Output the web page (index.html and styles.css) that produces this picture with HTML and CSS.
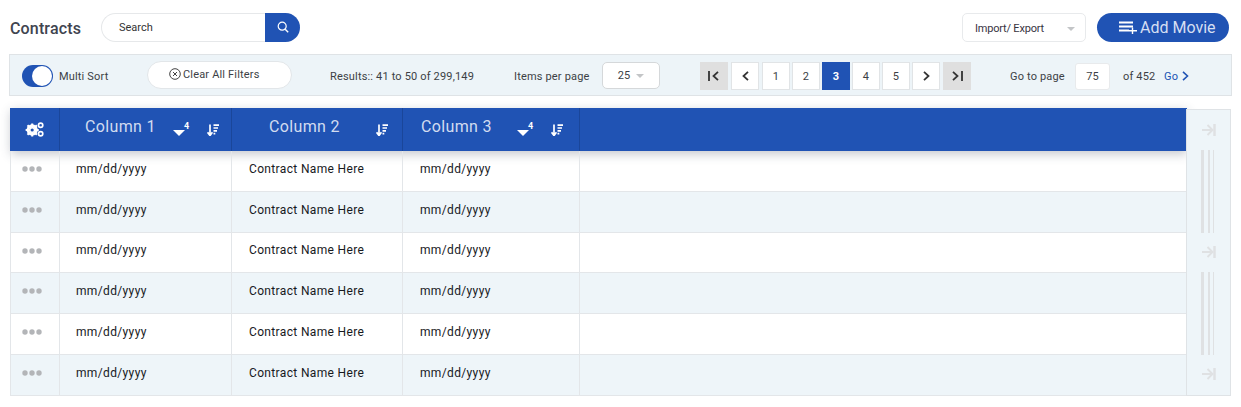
FILE: index.html
```html
<!DOCTYPE html>
<html lang="en">
<head>
<meta charset="UTF-8">
<title>Contracts</title>
<link rel="stylesheet" href="styles.css">
</head>
<body>
<svg class="defs" width="0" height="0">
  <symbol id="sort" viewBox="0 0 12 12">
    <path d="M3 0.5v10M0.6 8.300l2.400 3.200 2.400-3.200" fill="none" stroke="#fff" stroke-width="1.7"/>
    <path d="M6.500 1.200h5.500M6.500 4h4.500M6.500 6.800h3.500M6.500 9.600h1.800" stroke="#fff" stroke-width="1.700"/>
  </symbol>
  <symbol id="rail" viewBox="0 0 14 12">
    <path d="M0 6h10M5.5 1l5 5-5 5" fill="none" stroke="#dfe1e3" stroke-width="1.9"/>
    <path d="M12.5 0v12" stroke="#dfe1e3" stroke-width="2.5"/>
  </symbol>
  <symbol id="dots" viewBox="0 0 20 6">
    <circle cx="3" cy="3" r="2.7" fill="#b3b5b8"/><circle cx="10" cy="3" r="2.7" fill="#b3b5b8"/><circle cx="17" cy="3" r="2.7" fill="#b3b5b8"/>
  </symbol>
</svg>

<div class="topbar">
  <h1 class="title">Contracts</h1>
  <div class="search">
    <span class="search-text">Search</span>
    <span class="search-btn">
      <svg width="12" height="12" viewBox="0 0 12 12"><circle cx="5.2" cy="5.2" r="4" fill="none" stroke="#fff" stroke-width="1.2"/><path d="M8.2 8.2l3 3" stroke="#fff" stroke-width="1.4"/></svg>
    </span>
  </div>
  <div class="import">Import/ Export<span class="caret"></span></div>
  <button class="add-btn">
    <svg width="18" height="13" viewBox="0 0 18 13"><path d="M0 1.500h14M0 5.500h14M0 9.500h10" stroke="#fff" stroke-width="1.800" fill="none"/><path d="M13.500 6.500v6.500M10 9.700h8" stroke="#fff" stroke-width="1.400"/></svg>
    Add Movie
  </button>
</div>

<div class="toolbar">
  <span class="toggle"><span class="knob"></span></span>
  <span class="multi">Multi Sort</span>
  <button class="clear">
    <svg width="12" height="12" viewBox="0 0 12 12"><circle cx="6" cy="6" r="5.300" fill="none" stroke="#444" stroke-width="1"/><path d="M4 4l4 4M8 4l-4 4" stroke="#444" stroke-width="1"/></svg>
    Clear All Filters
  </button>
  <span class="results">Results:: 41 to 50 of 299,149</span>
  <span class="items">Items per page</span>
  <div class="per-page">25<span class="caret"></span></div>
  <div class="pager">
    <a class="pg pg-end pg-first"><svg width="12" height="10" viewBox="0 0 12 10"><path d="M1 0v10" stroke="#333" stroke-width="1.800"/><path d="M10 .8L5.500 5l4.500 4.200" fill="none" stroke="#333" stroke-width="1.800"/></svg></a>
    <a class="pg pg-prev"><svg width="7" height="10" viewBox="0 0 7 10"><path d="M6 .8L1.500 5 6 9.200" fill="none" stroke="#333" stroke-width="1.800"/></svg></a>
    <a class="pg">1</a>
    <a class="pg">2</a>
    <a class="pg pg-on">3</a>
    <a class="pg">4</a>
    <a class="pg">5</a>
    <a class="pg"><svg width="7" height="10" viewBox="0 0 7 10"><path d="M1 .8L5.500 5 1 9.200" fill="none" stroke="#333" stroke-width="1.800"/></svg></a>
    <a class="pg pg-end pg-last"><svg width="12" height="10" viewBox="0 0 12 10"><path d="M11 0v10" stroke="#333" stroke-width="1.800"/><path d="M2 .8L6.500 5 2 9.200" fill="none" stroke="#333" stroke-width="1.800"/></svg></a>
  </div>
  <span class="goto">Go to page</span>
  <span class="page-input">75</span>
  <span class="of">of 452</span>
  <a class="go">Go
    <svg width="7" height="10" viewBox="0 0 7 10"><path d="M1 .8L5.500 5 1 9.200" fill="none" stroke="#2053b4" stroke-width="1.600"/></svg>
  </a>
</div>

<div class="grid-wrap">
  <table class="grid">
    <colgroup>
      <col class="c0"><col class="c1"><col class="c2"><col class="c3"><col>
    </colgroup>
    <thead>
      <tr>
        <th>
          <svg class="gears" width="20" height="15" viewBox="0 0 20 16">
            <circle cx="7" cy="8.500" r="4.500" fill="none" stroke="#fff" stroke-width="3"/>
            <path d="M7 1.500v14M0 8.500h14M2 3.500l10 10M12 3.500l-10 10" stroke="#fff" stroke-width="2.200"/>
            <circle cx="7" cy="8.500" r="1.700" fill="#2053b4"/>
            <circle cx="16" cy="3.500" r="2.300" fill="none" stroke="#fff" stroke-width="1.800"/>
            <circle cx="16" cy="12.500" r="2.300" fill="none" stroke="#fff" stroke-width="1.800"/>
          </svg>
        </th>
        <th><div class="th-in"><span class="col-name n1">Column 1</span><span class="drop"><span class="tri"></span><sup>4</sup></span><svg class="sort" width="12" height="12"><use href="#sort"/></svg></div></th>
        <th><div class="th-in"><span class="col-name n2">Column 2</span><svg class="sort" width="12" height="12"><use href="#sort"/></svg></div></th>
        <th><div class="th-in"><span class="col-name n3">Column 3</span><span class="drop"><span class="tri"></span><sup>4</sup></span><svg class="sort" width="12" height="12"><use href="#sort"/></svg></div></th>
        <th></th>
      </tr>
    </thead>
    <tbody>
      <tr class="r1"><td class="dots"><svg width="20" height="6"><use href="#dots"/></svg></td><td>mm/dd/yyyy</td><td>Contract Name Here</td><td>mm/dd/yyyy</td><td></td></tr>
      <tr class="r2 alt"><td class="dots"><svg width="20" height="6"><use href="#dots"/></svg></td><td>mm/dd/yyyy</td><td>Contract Name Here</td><td>mm/dd/yyyy</td><td></td></tr>
      <tr class="r1"><td class="dots"><svg width="20" height="6"><use href="#dots"/></svg></td><td>mm/dd/yyyy</td><td>Contract Name Here</td><td>mm/dd/yyyy</td><td></td></tr>
      <tr class="r2 alt"><td class="dots"><svg width="20" height="6"><use href="#dots"/></svg></td><td>mm/dd/yyyy</td><td>Contract Name Here</td><td>mm/dd/yyyy</td><td></td></tr>
      <tr class="r2"><td class="dots"><svg width="20" height="6"><use href="#dots"/></svg></td><td>mm/dd/yyyy</td><td>Contract Name Here</td><td>mm/dd/yyyy</td><td></td></tr>
      <tr class="r2 alt"><td class="dots"><svg width="20" height="6"><use href="#dots"/></svg></td><td>mm/dd/yyyy</td><td>Contract Name Here</td><td>mm/dd/yyyy</td><td></td></tr>
    </tbody>
  </table>
  <div class="rail">
    <svg class="rail-arrow" width="14" height="12"><use href="#rail"/></svg>
    <div class="bars"><i></i><i></i><i></i></div>
    <svg class="rail-arrow" width="14" height="12"><use href="#rail"/></svg>
    <div class="bars"><i></i><i></i><i></i></div>
    <svg class="rail-arrow" width="14" height="12"><use href="#rail"/></svg>
  </div>
</div>
</body>
</html>
```

FILE: styles.css
```css
* {
  box-sizing: border-box;
}
body {
  margin: 0;
  background: #fff;
  font-family: Roboto, "Liberation Sans", sans-serif;
  font-size: 11px;
  letter-spacing: .17px;
  color: #3c3f45;
  overflow: hidden;
}
.defs {
  display: block;
  height: 0;
}
.topbar {
  display: flex;
  align-items: center;
  height: 54px;
  padding: 0 12px 0 10px;
}
.title {
  margin: 0;
  width: 91px;
  padding-top: 2px;
  font-size: 16px;
  font-weight: 500;
  letter-spacing: .15px;
  color: #40444f;
}
.search {
  display: flex;
  width: 199px;
  height: 29px;
  border: 1px solid #e6e8ea;
  border-right: none;
  border-radius: 15px;
  background: #fff;
}
.search-text {
  flex: 1;
  padding-left: 17px;
  line-height: 28px;
  letter-spacing: 0;
  color: #333;
}
.search-btn {
  display: flex;
  align-items: center;
  justify-content: center;
  width: 35px;
  margin: -1px 0;
  background: #2053b4;
  border-radius: 0 15px 15px 0;
}
.import {
  position: relative;
  width: 124px;
  height: 29px;
  margin-left: auto;
  padding-left: 12px;
  border: 1px solid #e8eaec;
  border-radius: 5px;
  line-height: 29px;
  letter-spacing: -.2px;
  color: #38343f;
}
.import .caret {
  position: absolute;
  right: 10px;
  top: 13px;
}
.caret {
  display: inline-block;
  width: 0;
  height: 0;
  border-left: 4px solid transparent;
  border-right: 4px solid transparent;
  border-top: 4px solid #c3c5c7;
}
.add-btn {
  display: flex;
  align-items: center;
  gap: 3px;
  width: 132px;
  height: 29px;
  margin-left: 11px;
  padding: 0 0 0 22px;
  border: none;
  border-radius: 15px;
  background: #2053b4;
  color: #d5dff2;
  font-family: inherit;
  font-size: 16px;
}
.toolbar {
  display: flex;
  align-items: center;
  width: 1223px;
  height: 42px;
  margin-left: 9px;
  padding: 2px 0 0 12px;
  background: #edf4f8;
  border: 1px solid #dfe3e6;
}
.toggle {
  display: block;
  width: 31px;
  height: 22px;
  border-radius: 11px;
  background: #2053b4;
  padding: 1px 0 0 10px;
}
.knob {
  display: block;
  width: 20px;
  height: 20px;
  border-radius: 50%;
  background: #fff;
}
.multi {
  margin-left: 6px;
  width: 88px;
}
.clear {
  display: flex;
  align-items: center;
  gap: 2px;
  width: 145px;
  height: 28px;
  margin-top: -2px;
  padding: 0 0 2px 21px;
  border: 1px solid #e2e6e9;
  border-radius: 14px;
  background: #fff;
  color: #3c3f45;
  font-family: inherit;
  font-size: 11px;
  letter-spacing: .17px;
}
.results {
  margin-left: 38px;
  width: 184px;
}
.items {
  width: 88px;
}
.per-page {
  display: flex;
  align-items: center;
  justify-content: center;
  gap: 6px;
  width: 58px;
  height: 27px;
  margin-top: -2px;
  padding-top: 1px;
  border: 1px solid #d5d8da;
  border-radius: 5px;
  background: #fff;
}
.pager {
  display: flex;
  gap: 2px;
  margin-left: 40px;
}
.pg {
  display: flex;
  align-items: center;
  justify-content: center;
  width: 28px;
  height: 28px;
  border: 1px solid #e1e4e6;
  background: #fff;
  color: #3c3f45;
}
.pg-end {
  background: #dfdfdf;
  border-color: #dfdfdf;
}
.pg-first,
.pg-prev {
  margin-right: 1px;
}
.pg-last {
  margin-left: 1px;
}
.pg-on {
  background: #2053b4;
  border-color: #2053b4;
  color: #fff;
  font-weight: 700;
}
.goto {
  margin-left: 39px;
  width: 65px;
}
.page-input {
  width: 35px;
  height: 27px;
  border: 1px solid #e8eaec;
  border-radius: 3px;
  background: #fff;
  text-align: center;
  line-height: 25px;
}
.of {
  margin-left: 13px;
  width: 41px;
}
.go {
  display: flex;
  align-items: center;
  gap: 4px;
  color: #2053b4;
}
.grid-wrap {
  display: flex;
  align-items: flex-start;
  margin: 12px 0 0 10px;
}
.grid {
  width: 1177px;
  table-layout: fixed;
  border-collapse: collapse;
  font-size: 12px;
  letter-spacing: .35px;
  color: #17191d;
}
.c0 {
  width: 49px;
}
.c1 {
  width: 172px;
}
.c2 {
  width: 171px;
}
.c3 {
  width: 177px;
}
.grid thead {
  box-shadow: 0 3px 10px rgba(60, 70, 90, .3);
}
.grid th {
  height: 43px;
  padding: 0;
  background: #2053b4;
  border-right: 1px solid #1a469a;
  font-weight: 400;
  text-align: left;
}
.grid th:first-child {
  border-left: 1px solid #2053b4;
}
.grid th:last-child {
  border-right: none;
}
.gears {
  display: block;
  margin: 0 auto;
}
.th-in {
  display: flex;
  align-items: center;
  height: 36px;
}
.col-name {
  margin-bottom: 7px;
  color: #d2dcf0;
  font-size: 16px;
  letter-spacing: .35px;
}
.n1 {
  margin-left: 25px;
  width: 88px;
}
.n2 {
  margin-left: 37px;
  width: 107px;
}
.n3 {
  margin-left: 18px;
  width: 96px;
}
.drop {
  display: flex;
  align-items: flex-start;
  width: 34px;
  color: #fff;
  padding-top: 2px;
}
.tri {
  display: block;
  width: 0;
  height: 0;
  margin-top: 5px;
  border-left: 6px solid transparent;
  border-right: 6px solid transparent;
  border-top: 6px solid #fff;
}
.drop sup {
  margin: -4px 0 0 -1px;
  font-size: 9px;
  font-weight: 700;
  line-height: 10px;
}
.grid td {
  padding: 0 0 4px 16px;
  border: 1px solid #e3e6e9;
  border-top: none;
}
.grid td:nth-child(3),
.grid td:nth-child(4) {
  padding-left: 17px;
}
.grid td.dots {
  padding: 0 0 3px 11px;
}
.dots svg {
  display: block;
}
.r1 td {
  height: 40px;
}
.r2 td {
  height: 41px;
}
.alt td {
  background: #eef5f9;
}
.rail {
  display: flex;
  flex-direction: column;
  align-items: center;
  width: 45px;
  height: 287px;
  margin: 1px 0 0 -1px;
  padding-top: 14px;
  background: #eef5f9;
  border: 1px solid #dfe3e6;
  position: relative;
}
.rail-arrow {
  flex: none;
  display: block;
}
.bars {
  display: flex;
  flex: none;
  height: 83px;
  margin: 14px 2px 13px 0;
}
.bars i {
  display: block;
  width: 3px;
  background: #dfe1e3;
}
.bars i:nth-child(2) {
  width: 2px;
  margin: 0 3px 0 4px;
}
.bars i:nth-child(3) {
  width: 1px;
}
```
